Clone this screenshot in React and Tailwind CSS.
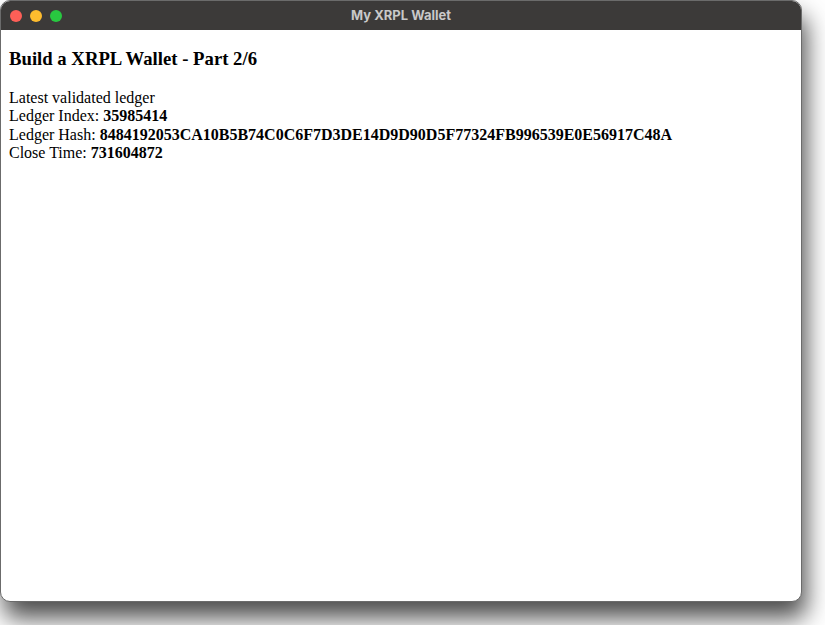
export default function App() {
  const ledger = {
    index: "35985414",
    hash: "8484192053CA10B5B74C0C6F7D3DE14D9D90D5F77324FB996539E0E56917C48A",
    closeTime: "731604872",
  };

  return (
    <div className="w-[825px] h-[625px] bg-white overflow-hidden">
      <div className="w-[802px] h-[602px] rounded-[10px] border border-[#6b6b6b] bg-white overflow-hidden flex flex-col shadow-[4px_16px_24px_rgba(0,0,0,0.7)]">
        {/* title bar */}
        <div className="relative h-[29px] shrink-0 bg-[#3c3a39] flex items-center">
          <div className="flex gap-[8px] pl-[9px]">
            <span className="w-[12px] h-[12px] rounded-full bg-[#fe5f57]" />
            <span className="w-[12px] h-[12px] rounded-full bg-[#febc2e]" />
            <span className="w-[12px] h-[12px] rounded-full bg-[#28c840]" />
          </div>
          <div className="absolute inset-0 flex items-center justify-center text-[13px] font-bold text-[#c9c9c9] font-['Inter','Noto_Sans',sans-serif]">
            My XRPL Wallet
          </div>
        </div>

        {/* page */}
        <div className="flex-1 px-[8px] font-['Liberation_Serif',serif] text-black text-[16px] leading-[18.5px]">
          <h3 className="text-[18.72px] font-bold leading-[21.5px] mt-[18px] mb-[19px]">
            Build a XRPL Wallet - Part 2/6
          </h3>
          <div>Latest validated ledger</div>
          <div>
            Ledger Index: <b>{ledger.index}</b>
          </div>
          <div>
            Ledger Hash: <b>{ledger.hash}</b>
          </div>
          <div>
            Close Time: <b>{ledger.closeTime}</b>
          </div>
        </div>
      </div>
    </div>
  );
}
